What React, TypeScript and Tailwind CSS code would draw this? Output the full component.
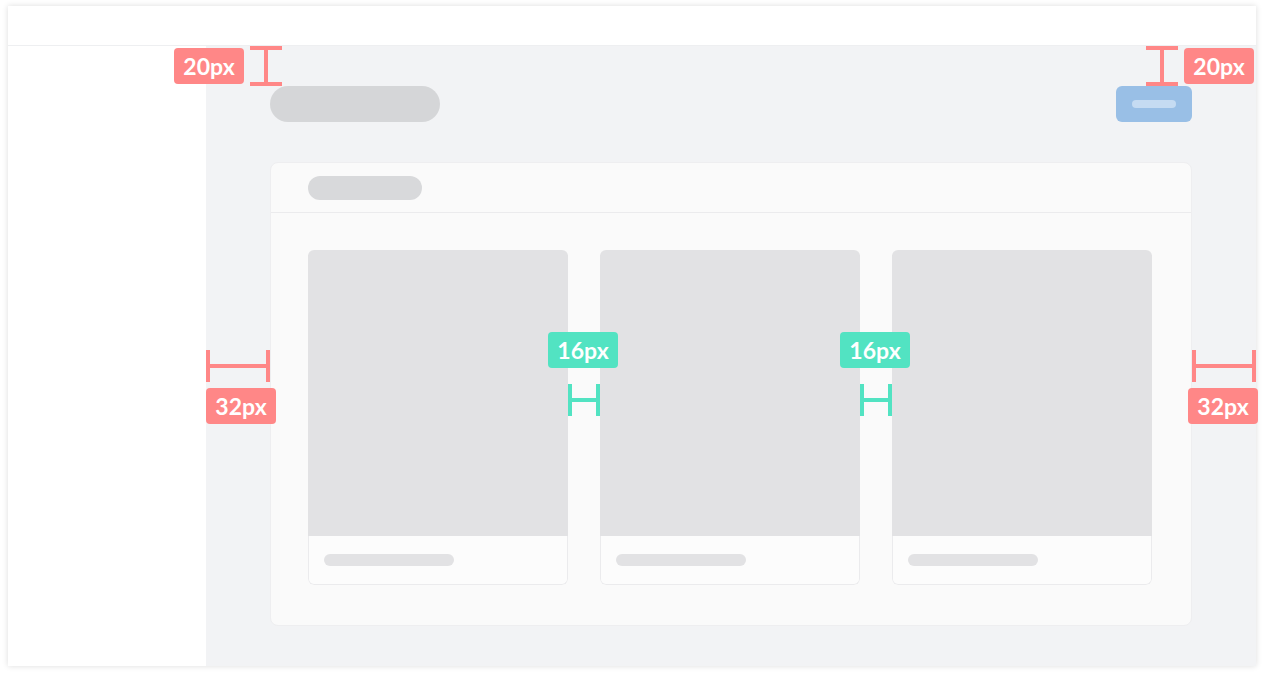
import React from "react";

const Tag: React.FC<{ text: string; color: string; className: string }> = ({ text, color, className }) => (
  <div
    className={`absolute flex h-9 w-[70px] items-center justify-center rounded-[4px] pt-px text-[23px] font-bold leading-none text-white ${color} ${className}`}
    style={{ fontFamily: "Lato, 'Open Sans', sans-serif" }}
  >
    {text}
  </div>
);

// vertical I-beam marker (20px spacing)
const IBeam: React.FC<{ className: string }> = ({ className }) => (
  <svg className={`absolute ${className}`} width="32" height="40" viewBox="0 0 32 40">
    <rect x="0" y="0" width="32" height="4" fill="#ff8787" />
    <rect x="14" y="0" width="4" height="40" fill="#ff8787" />
    <rect x="0" y="36" width="32" height="4" fill="#ff8787" />
  </svg>
);

// horizontal H marker
const HBeam: React.FC<{ className: string; w: number; h: number; fill: string }> = ({ className, w, h, fill }) => (
  <svg className={`absolute ${className}`} width={w} height={h} viewBox={`0 0 ${w} ${h}`}>
    <rect x="0" y="0" width="4" height={h} fill={fill} />
    <rect x={w - 4} y="0" width="4" height={h} fill={fill} />
    <rect x="0" y={h / 2 - 2} width={w} height="4" fill={fill} />
  </svg>
);

const Tile: React.FC = () => (
  <div className="flex flex-col overflow-hidden rounded-md">
    <div className="h-[286px] bg-[#e2e2e4]" />
    <div className="h-[49px] rounded-b-md border-x border-b border-[#ebebed] bg-[#fcfcfc] pl-[15px] pt-[18px]">
      <div className="h-3 w-[130px] rounded-full bg-[#e2e2e4]" />
    </div>
  </div>
);

const App: React.FC = () => {
  return (
    <div className="relative h-[676px] w-[1264px] overflow-hidden bg-white pl-2 pt-[6px]">
      <div className="flex h-[660px] w-[1248px] flex-col bg-white shadow-[0_0_6px_rgba(0,0,0,0.14)]">
        {/* top bar */}
        <div className="h-10 shrink-0 border-b border-[#eeeff1] bg-white" />

        <div className="flex flex-1">
          {/* sidebar */}
          <div className="w-[198px] shrink-0 bg-white" />

          {/* main */}
          <div className="flex-1 bg-[#f2f3f5] px-16 pt-10">
            <div className="flex items-center justify-between">
              <div className="h-9 w-[170px] rounded-full bg-[#d5d6d8]" />
              <div className="flex h-9 w-[76px] items-center justify-center rounded-md bg-[#99bfe6]">
                <div className="h-2 w-11 rounded-full bg-[#c5dbf2]" />
              </div>
            </div>

            <div className="mt-10 rounded-lg border border-[#eeeef0] bg-[#fafafa]">
              <div className="flex h-[50px] items-center border-b border-[#ebebed] px-[37px]">
                <div className="h-6 w-[114px] rounded-full bg-[#d8d9db]" />
              </div>
              <div className="grid grid-cols-[260px_260px_260px] gap-8 px-[37px] pb-10 pt-[37px]">
                <Tile />
                <Tile />
                <Tile />
              </div>
            </div>
          </div>
        </div>
      </div>

      {/* spacing annotations */}
      <Tag text="20px" color="bg-[#ff8787]" className="left-[174px] top-[48px]" />
      <IBeam className="left-[250px] top-[46px]" />
      <Tag text="20px" color="bg-[#ff8787]" className="left-[1184px] top-[48px]" />
      <IBeam className="left-[1146px] top-[46px]" />

      <Tag text="16px" color="bg-[#52e3c2]" className="left-[548px] top-[332px]" />
      <HBeam className="left-[568px] top-[384px]" w={32} h={32} fill="#52e3c2" />
      <Tag text="16px" color="bg-[#52e3c2]" className="left-[840px] top-[332px]" />
      <HBeam className="left-[860px] top-[384px]" w={32} h={32} fill="#52e3c2" />

      <HBeam className="left-[206px] top-[350px]" w={64} h={32} fill="#ff8787" />
      <Tag text="32px" color="bg-[#ff8787]" className="left-[206px] top-[388px]" />
      <HBeam className="left-[1192px] top-[350px]" w={64} h={32} fill="#ff8787" />
      <Tag text="32px" color="bg-[#ff8787]" className="left-[1188px] top-[388px]" />
    </div>
  );
};

export default App;
